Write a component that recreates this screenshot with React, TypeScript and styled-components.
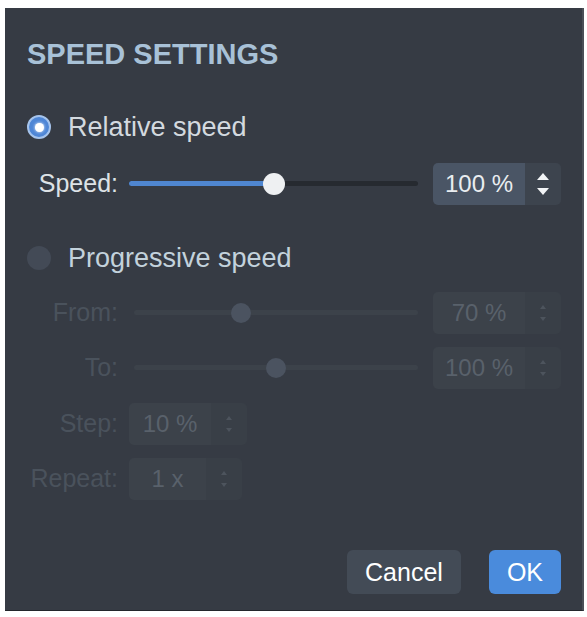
import * as React from "react";
import styled, { createGlobalStyle } from "styled-components";

const GlobalStyle = createGlobalStyle`
  html, body {
    margin: 0;
    padding: 0;
    background: #ffffff;
  }
  * {
    box-sizing: border-box;
  }
`;

const Page = styled.div`
  padding: 8px 3px 0 5px;
  font-family: "Liberation Sans", Arial, sans-serif;
`;

const Panel = styled.div`
  display: flex;
  flex-direction: column;
  height: 603px;
  padding: 31px 21px 16px 22px;
  background: #363b44;
  border-right: 2px solid #4a4f57;
  border-bottom: 1px solid #23262b;
`;

const Title = styled.h1`
  margin: 0;
  font-size: 29px;
  line-height: 30px;
  font-weight: 700;
  color: #a8c1d7;
`;

const RadioRow = styled.div<{ $top: number }>`
  display: flex;
  align-items: center;
  height: 30px;
  margin-top: ${p => p.$top}px;
`;

const Radio = styled.span<{ $checked?: boolean }>`
  display: flex;
  align-items: center;
  justify-content: center;
  width: 24px;
  height: 24px;
  border-radius: 50%;
  background: ${p => (p.$checked ? "#4e86d6" : "#434a56")};
  border: ${p => (p.$checked ? "2px solid #a6c4ec" : "none")};
  &::after {
    content: "";
    display: ${p => (p.$checked ? "block" : "none")};
    width: 9px;
    height: 9px;
    border-radius: 50%;
    background: #ffffff;
    box-shadow: 0 0 3px #ffffff;
  }
`;

const RadioLabel = styled.span<{ $tone: string }>`
  margin-left: 17px;
  font-size: 27px;
  color: ${p => p.$tone};
`;

const FieldRow = styled.div<{ $top: number }>`
  display: flex;
  align-items: center;
  height: 43px;
  margin-top: ${p => p.$top}px;
`;

const Label = styled.span<{ $disabled?: boolean }>`
  width: 91px;
  margin-right: 11px;
  text-align: right;
  font-size: 25px;
  color: ${p => (p.$disabled ? "#4a525c" : "#dde2e6")};
`;

const SliderTrack = styled.div<{ $disabled?: boolean }>`
  position: relative;
  flex: 1;
  height: 5px;
  margin: 0 15px 0 ${p => (p.$disabled ? 5 : 0)}px;
  border-radius: 3px;
  background: ${p => (p.$disabled ? "#3c424a" : "#262a30")};
`;

const SliderFill = styled.div`
  height: 100%;
  border-radius: 3px;
  background: #4f86d0;
`;

const Thumb = styled.div<{ $disabled?: boolean }>`
  position: absolute;
  top: 50%;
  width: ${p => (p.$disabled ? 20 : 22)}px;
  height: ${p => (p.$disabled ? 20 : 22)}px;
  margin: ${p => (p.$disabled ? "-10px 0 0 -10px" : "-11px 0 0 -11px")};
  border-radius: 50%;
  background: ${p => (p.$disabled ? "#4b5360" : "#eef0f2")};
`;

const NumberBox = styled.div`
  display: flex;
  height: 42px;
`;

const NumberValue = styled.div<{ $width: number; $disabled?: boolean }>`
  display: flex;
  align-items: center;
  justify-content: center;
  width: ${p => p.$width}px;
  border-radius: 5px 0 0 5px;
  font-size: 24px;
  background: ${p => (p.$disabled ? "#3c424a" : "#4a5565")};
  color: ${p => (p.$disabled ? "#59616b" : "#e9edf0")};
`;

const Spinner = styled.div<{ $disabled?: boolean }>`
  display: flex;
  align-items: center;
  justify-content: center;
  width: 36px;
  border-radius: 0 5px 5px 0;
  background: ${p => (p.$disabled ? "#393f47" : "#3d444e")};
  color: ${p => (p.$disabled ? "#4d545d" : "#f2f4f6")};
`;

const ButtonRow = styled.div`
  display: flex;
  justify-content: flex-end;
  gap: 28px;
  margin-top: auto;
`;

const Button = styled.button<{ $primary?: boolean }>`
  height: 44px;
  padding: 0 ${p => (p.$primary ? 18 : 18)}px;
  border: none;
  border-radius: 6px;
  font-family: inherit;
  font-size: 25px;
  color: #ffffff;
  background: ${p => (p.$primary ? "#4a8bdc" : "#434b56")};
`;

const Arrows = ({ small }: { small?: boolean }) => (
  <svg width="14" height="28" viewBox="0 0 14 28" fill="currentColor">
    {small ? (
      <>
        <path d="M4 10 L7 6 L10 10 Z" />
        <path d="M4 18 L7 22 L10 18 Z" />
      </>
    ) : (
      <>
        <path d="M1 10 L7 3 L13 10 Z" />
        <path d="M1 18 L7 25 L13 18 Z" />
      </>
    )}
  </svg>
);

const Slider = ({ value, disabled }: { value: number; disabled?: boolean }) => (
  <SliderTrack $disabled={disabled}>
    {!disabled && <SliderFill style={{ width: `${value * 100}%` }} />}
    <Thumb $disabled={disabled} style={{ left: `${value * 100}%` }} />
  </SliderTrack>
);

const NumberField = ({ value, width, disabled }: { value: string; width: number; disabled?: boolean }) => (
  <NumberBox>
    <NumberValue $width={width} $disabled={disabled}>
      {value}
    </NumberValue>
    <Spinner $disabled={disabled}>
      <Arrows small={disabled} />
    </Spinner>
  </NumberBox>
);

export default function App() {
  return (
    <Page>
      <GlobalStyle />
      <Panel>
        <Title>SPEED SETTINGS</Title>

        <RadioRow $top={43}>
          <Radio $checked />
          <RadioLabel $tone="#d3d9df">Relative speed</RadioLabel>
        </RadioRow>
        <FieldRow $top={20}>
          <Label>Speed:</Label>
          <Slider value={0.503} />
          <NumberField value="100 %" width={92} />
        </FieldRow>

        <RadioRow $top={38}>
          <Radio />
          <RadioLabel $tone="#c3d2dc">Progressive speed</RadioLabel>
        </RadioRow>
        <FieldRow $top={18}>
          <Label $disabled>From:</Label>
          <Slider value={0.375} disabled />
          <NumberField value="70 %" width={92} disabled />
        </FieldRow>
        <FieldRow $top={12}>
          <Label $disabled>To:</Label>
          <Slider value={0.5} disabled />
          <NumberField value="100 %" width={92} disabled />
        </FieldRow>
        <FieldRow $top={13}>
          <Label $disabled>Step:</Label>
          <NumberField value="10 %" width={82} disabled />
        </FieldRow>
        <FieldRow $top={12}>
          <Label $disabled>Repeat:</Label>
          <NumberField value="1 x" width={77} disabled />
        </FieldRow>

        <ButtonRow>
          <Button>Cancel</Button>
          <Button $primary>OK</Button>
        </ButtonRow>
      </Panel>
    </Page>
  );
}
